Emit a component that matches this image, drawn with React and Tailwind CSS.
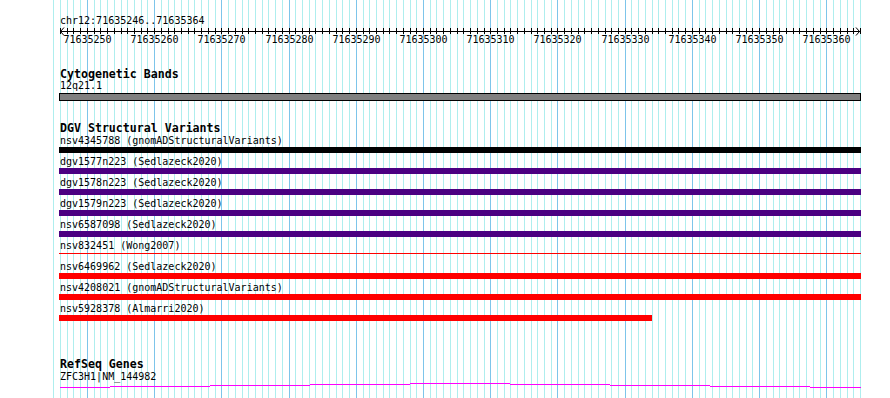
import React from "react";

const PX = 800 / 119;
const gx = (i) => Math.round(60 + i * PX);

function Grid() {
  const lines = [];
  for (let i = -1; i <= 119; i++) {
    const blue = (71635246 + i) % 10 === 0;
    lines.push(
      <rect key={i} x={gx(i)} y={0} width={1} height={398} fill={blue ? "#7dc5ea" : "#aeeeee"} />
    );
  }
  return (
    <svg className="absolute left-0 top-0" width={890} height={398} shapeRendering="crispEdges">
      {lines}
    </svg>
  );
}

function Ruler() {
  const ticks = [];
  for (let i = 0; i <= 119; i++) {
    const x = gx(i) - 59 + 0.5;
    ticks.push(<line key={i} x1={x} x2={x} y1={1} y2={7} stroke="#000" strokeWidth={1} />);
  }
  return (
    <svg width={802} height={8} className="block overflow-visible" shapeRendering="crispEdges">
      <line x1={1} x2={801} y1={4.5} y2={4.5} stroke="#000" strokeWidth={1} />
      {ticks}
      <polyline points="5,0.5 1.5,4.5 5,8.5" fill="none" stroke="#000" strokeWidth={1} shapeRendering="auto" />
      <polyline points="797,0.5 800.5,4.5 797,8.5" fill="none" stroke="#000" strokeWidth={1} shapeRendering="auto" />
    </svg>
  );
}

function RulerLabels() {
  const labels = [];
  for (let k = 0; k <= 11; k++) {
    const i = 4 + 10 * k;
    const x = gx(i) - 59 + 0.5;
    labels.push(
      <span
        key={k}
        className="absolute top-0 -translate-x-1/2 whitespace-nowrap"
        style={{ left: x }}
      >
        {71635250 + 10 * k}
      </span>
    );
  }
  return <div className="relative h-[10px] leading-[10px] text-[10px]">{labels}</div>;
}

const rows = [
  { label: "dgv1577n223 (Sedlazeck2020)", color: "bg-[#4b0082]" },
  { label: "dgv1578n223 (Sedlazeck2020)", color: "bg-[#4b0082]" },
  { label: "dgv1579n223 (Sedlazeck2020)", color: "bg-[#4b0082]" },
  { label: "nsv6587098 (Sedlazeck2020)", color: "bg-[#4b0082]" },
  { label: "nsv832451 (Wong2007)", color: "bg-[#ff0000]", thin: true },
  { label: "nsv6469962 (Sedlazeck2020)", color: "bg-[#ff0000]" },
  { label: "nsv4208021 (gnomADStructuralVariants)", color: "bg-[#ff0000]" },
  { label: "nsv5928378 (Almarri2020)", color: "bg-[#ff0000]", short: true },
];

function GeneLine() {
  const ys = [5, 4, 3, 2, 1, 2, 3, 4, 5];
  const xs = [1, 51, 151, 251, 351, 451, 551, 651, 751, 802];
  return (
    <svg width={802} height={6} className="block" shapeRendering="crispEdges">
      {ys.map((y, k) => (
        <rect key={k} x={xs[k]} y={y} width={xs[k + 1] - xs[k]} height={1} fill="#ff00ff" />
      ))}
    </svg>
  );
}

export default function App() {
  return (
    <div
      className="relative w-[890px] h-[398px] overflow-hidden bg-white text-black"
      style={{ fontFamily: '"DejaVu Sans Mono", "Liberation Mono", monospace' }}
    >
      <Grid />
      <div className="relative ml-[59px] w-[802px]">
        <div className="mt-[15px] h-[12px] pl-[1px] text-[10px] leading-[12px]">chr12:71635246..71635364</div>
        <Ruler />
        <RulerLabels />

        <div className="mt-[23px] h-[12px] pl-[1px] text-[11.6px] font-bold leading-[12px]">Cytogenetic Bands</div>
        <div className="h-[12px] pl-[1px] text-[10px] leading-[12px]">12q21.1</div>
        <div className="mt-[1px] h-[8px] border border-black bg-[#808080]" />

        <div className="mt-[21px] h-[12px] pl-[1px] text-[11.6px] font-bold leading-[12px]">DGV Structural Variants</div>
        <div className="h-[13px] pl-[1px] text-[10px] leading-[13px]">nsv4345788 (gnomADStructuralVariants)</div>
        <div className="h-[6px] bg-black" />
        {rows.map((r) => (
          <div key={r.label}>
            <div className="h-[15px] pt-[2px] pl-[1px] text-[10px] leading-[13px]">{r.label}</div>
            {r.thin ? (
              <div className="h-[6px] pt-[1px]">
                <div className={`h-[1px] ${r.color}`} />
              </div>
            ) : (
              <div className={`h-[6px] ${r.color} ${r.short ? "w-[593px]" : "w-full"}`} />
            )}
          </div>
        ))}

        <div className="mt-[37px] h-[12px] pl-[1px] text-[11.6px] font-bold leading-[12px]">RefSeq Genes</div>
        <div className="mt-[1px] h-[11px] pl-[1px] text-[10px] leading-[11px]">ZFC3H1|NM_144982</div>
        <GeneLine />
      </div>
    </div>
  );
}
